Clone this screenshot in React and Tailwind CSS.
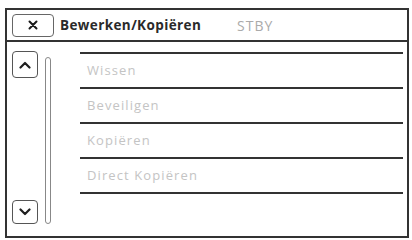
import React from "react";

const items = ["Wissen", "Beveiligen", "Kopiëren", "Direct Kopiëren"];

function Chevron({ up }) {
  return (
    <svg width="12" height="8" viewBox="0 0 12 8" fill="none">
      <path
        d={up ? "M1.5 6.5L6 2l4.5 4.5" : "M1.5 1.5L6 6l4.5-4.5"}
        stroke="#1f1f1f"
        strokeWidth="2.2"
        strokeLinecap="round"
        strokeLinejoin="round"
      />
    </svg>
  );
}

export default function App() {
  return (
    <div className="w-[412px] h-[240px] bg-white pt-[8px] pl-[5px] font-['Open_Sans',sans-serif]">
      <div className="w-[404px] h-[230px] border-2 border-[#333] flex flex-col">
        {/* Header */}
        <div className="h-[32px] border-b-2 border-[#333] flex items-center pl-[5px]">
          <div className="w-[42px] h-[23px] border-[1.5px] border-[#666] rounded-[4px] flex items-center justify-center">
            <svg width="10" height="10" viewBox="0 0 10 10">
              <path d="M1.5 1.5l7 7M8.5 1.5l-7 7" stroke="#1a1a1a" strokeWidth="2" strokeLinecap="round" />
            </svg>
          </div>
          <div className="w-[183px] pl-[6px] text-[13.5px] font-bold text-[#2a2a2a] tracking-[0.4px]">
            Bewerken/Kopiëren
          </div>
          <div className="text-[14px] text-[#aaa] tracking-[1px]">STBY</div>
        </div>

        {/* Body */}
        <div className="flex flex-1">
          <div className="w-[73px] flex pl-[5px]">
            <div className="flex flex-col justify-between pt-[9px] pb-[12px]">
              <div className="w-[26px] h-[27px] border-[1.5px] border-[#555] rounded-[4px] flex items-center justify-center">
                <Chevron up />
              </div>
              <div className="w-[26px] h-[24px] border-[1.5px] border-[#555] rounded-[4px] flex items-center justify-center">
                <Chevron />
              </div>
            </div>
            <div className="ml-[7px] mt-[15px] mb-[12px] w-[6px] border-[1.5px] border-[#888] rounded-full" />
          </div>

          <div className="flex-1 mr-[4px] pt-[10px]">
            <div className="border-t-2 border-[#333]">
              {items.map((item) => (
                <div
                  key={item}
                  className="h-[35px] border-b-2 border-[#333] flex items-center pl-[7px] text-[13px] text-[#c4c4c4] tracking-[1.1px]"
                >
                  {item}
                </div>
              ))}
            </div>
          </div>
        </div>
      </div>
    </div>
  );
}
